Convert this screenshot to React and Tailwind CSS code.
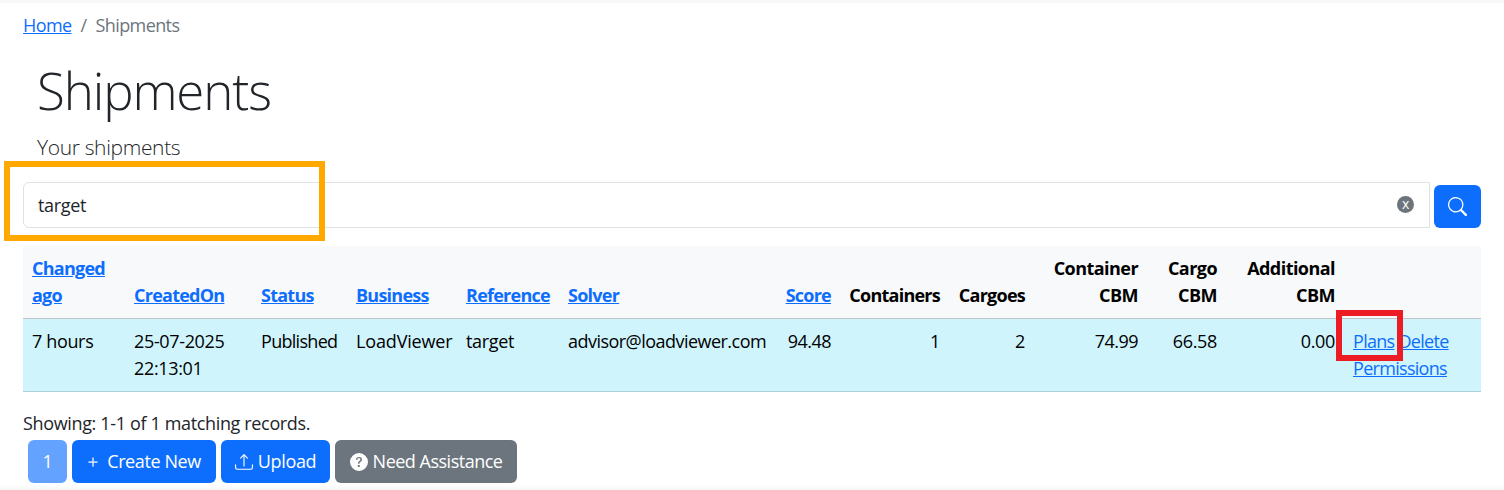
import React from 'react';
import { BsSearch, BsUpload, BsQuestionCircleFill, BsPlusLg } from 'react-icons/bs';

const headers = [
  { label: 'Changed ago', link: true },
  { label: 'CreatedOn', link: true },
  { label: 'Status', link: true },
  { label: 'Business', link: true },
  { label: 'Reference', link: true },
  { label: 'Solver', link: true },
  { label: 'Score', link: true, right: true },
  { label: 'Containers', right: true },
  { label: 'Cargoes', right: true },
  { label: 'Container CBM', right: true, wide: true },
  { label: 'Cargo CBM', right: true, wide: true },
  { label: 'Additional CBM', right: true, wide: true },
  { label: '' },
];

export default function App() {
  return (
    <div className="relative h-[490px] overflow-hidden bg-white text-[#212529] text-[18px] leading-[27px] tracking-[-0.35px] font-['Open_Sans','Noto_Sans',sans-serif]">
      <div className="h-[3px] bg-[#f8f8f8]" />

      <div className="px-[23px]">
        {/* Breadcrumb */}
        <div className="pt-[9px] flex text-[#6c757d] tracking-[-0.6px]">
          <a href="#" className="text-[#0d6efd] underline">Home</a>
          <span className="px-[9px]">/</span>
          <span>Shipments</span>
        </div>

        {/* Title */}
        <div className="pl-[14px] pt-[19px]">
          <h1 className="text-[51px] leading-[64px] font-light tracking-[-1.1px]">Shipments</h1>
          <p className="text-[21px] leading-[32px] font-light mt-[9px]">Your shipments</p>
        </div>

        {/* Search */}
        <div className="mt-[19px] flex gap-[4px] items-end">
          <div className="relative flex-1 h-[46px] border border-[#dee2e6] rounded-l-[6px] flex items-center pl-[14px]">
            <span>target</span>
            <span className="absolute right-[15px] top-[13px] w-[17px] h-[17px] rounded-full bg-[#6c757d] text-white text-[14px] leading-[15px] text-center">x</span>
          </div>
          <button className="w-[47px] h-[43px] rounded-[6px] bg-[#0d6efd] text-white flex items-center justify-center">
            <BsSearch className="w-[19px] h-[19px]" />
          </button>
        </div>

        {/* Table */}
        <table className="mt-[18px] w-[1458px] table-fixed border-collapse">
          <colgroup>
            <col className="w-[102px]" />
            <col className="w-[127px]" />
            <col className="w-[95px]" />
            <col className="w-[110px]" />
            <col className="w-[102px]" />
            <col className="w-[216px]" />
            <col className="w-[65px]" />
            <col className="w-[109px]" />
            <col className="w-[85px]" />
            <col className="w-[113px]" />
            <col className="w-[79px]" />
            <col className="w-[118px]" />
            <col className="w-[137px]" />
          </colgroup>
          <thead>
            <tr className="bg-[#f8f9fa] border-b border-[#bfc4c8]">
              {headers.map((h, i) => (
                <th key={i} className={`p-[9px] align-bottom font-bold text-black whitespace-normal ${h.wide ? 'tracking-[-0.55px]' : 'tracking-[-0.75px]'} ${h.right ? 'text-right' : 'text-left'}`}>
                  {h.link ? <a href="#" className="text-[#0d6efd] underline">{h.label}</a> : h.label}
                </th>
              ))}
            </tr>
          </thead>
          <tbody>
            <tr className="bg-[#cff4fc] border-b border-[#b1cfd6] text-black align-top">
              <td className="p-[9px]">7 hours</td>
              <td className="p-[9px]">25-07-2025 22:13:01</td>
              <td className="p-[9px] tracking-[-0.7px]">Published</td>
              <td className="p-[9px] tracking-[-0.15px]">LoadViewer</td>
              <td className="p-[9px]">target</td>
              <td className="p-[9px] whitespace-nowrap tracking-[-0.53px]">advisor@loadviewer.com</td>
              <td className="p-[9px] text-right tracking-[-0.55px]">94.48</td>
              <td className="p-[9px] text-right">1</td>
              <td className="p-[9px] text-right">2</td>
              <td className="p-[9px] text-right tracking-[-0.55px]">74.99</td>
              <td className="p-[9px] text-right">66.58</td>
              <td className="p-[9px] text-right">0.00</td>
              <td className="p-[9px] tracking-[-0.7px]">
                <a href="#" className="text-[#0d6efd] underline">Plans</a>{' '}
                <a href="#" className="text-[#0d6efd] underline">Delete</a>{' '}
                <a href="#" className="text-[#0d6efd] underline">Permissions</a>
              </td>
            </tr>
          </tbody>
        </table>

        <div className="mt-[18px]">Showing: 1-1 of 1 matching records.</div>

        {/* Pager and actions */}
        <div className="ml-[5px] mt-[3px] flex gap-[5px]">
          <span className="w-[39px] h-[43px] rounded-[6px] bg-[#64a2ff] text-white flex items-center justify-center">1</span>
          <button className="w-[144px] h-[43px] rounded-[6px] bg-[#0d6efd] text-white flex items-center justify-center gap-[8px] tracking-[-0.4px]">
            <BsPlusLg className="w-[12px] h-[12px] stroke-[0.6px]" /> Create New
          </button>
          <button className="w-[109px] h-[43px] rounded-[6px] bg-[#0d6efd] text-white flex items-center justify-center gap-[5px]">
            <BsUpload className="w-[18px] h-[18px]" /> Upload
          </button>
          <button className="w-[182px] h-[43px] rounded-[6px] bg-[#6c757d] text-white flex items-center justify-center gap-[5px] tracking-[-0.5px]">
            <BsQuestionCircleFill className="w-[18px] h-[18px]" /> Need Assistance
          </button>
        </div>
      </div>

      {/* Annotation boxes */}
      <div className="absolute left-[4px] top-[161px] w-[321px] h-[80px] border-[6px] border-[#ffa800]" />
      <div className="absolute left-[1336px] top-[310px] w-[67px] h-[51px] border-[6px] border-[#ed1c24]" />
      <div className="absolute left-0 right-0 bottom-0 h-[5px] bg-gradient-to-b from-white to-[#f6f6f6]" />
    </div>
  );
}
